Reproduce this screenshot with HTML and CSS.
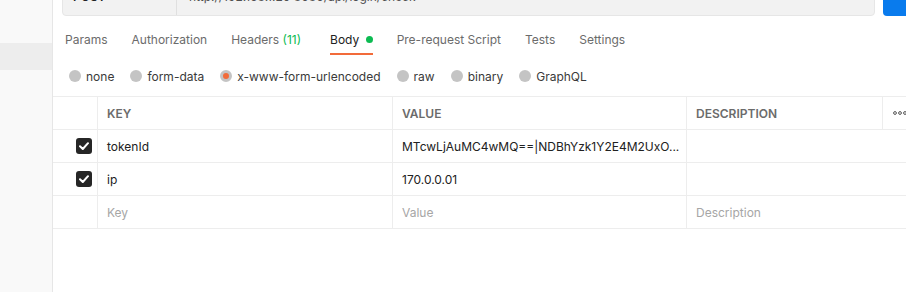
FILE: index.html
```html
<!DOCTYPE html>
<html lang="en">
<head>
    <meta charset="UTF-8">
    <meta name="viewport" content="width=device-width, initial-scale=1.0">
    <title>Request Body</title>
    <link rel="stylesheet" href="styles.css">
</head>
<body>
    <div class="app">
        <aside class="sidebar">
            <div class="side-item active"></div>
        </aside>

        <main class="main">
            <div class="request-bar">
                <div class="url-group">
                    <span class="method">POST</span>
                    <span class="url">http://192.168.1.20:8080/api/login/check</span>
                </div>
                <button class="send">Send</button>
            </div>

            <nav class="tabs">
                <span class="tab">Params</span>
                <span class="tab">Authorization</span>
                <span class="tab headers">Headers <span class="count">(11)</span></span>
                <span class="tab active">Body <span class="live-dot"></span></span>
                <span class="tab">Pre-request Script</span>
                <span class="tab">Tests</span>
                <span class="tab">Settings</span>
            </nav>

            <div class="body-types">
                <label class="radio"><span class="circle"></span>none</label>
                <label class="radio"><span class="circle"></span>form-data</label>
                <label class="radio"><span class="circle checked"></span>x-www-form-urlencoded</label>
                <label class="radio"><span class="circle"></span>raw</label>
                <label class="radio"><span class="circle"></span>binary</label>
                <label class="radio"><span class="circle"></span>GraphQL</label>
            </div>

            <div class="kv-table">
                <div class="row head">
                    <div class="cell check"></div>
                    <div class="cell key">KEY</div>
                    <div class="cell value">VALUE</div>
                    <div class="cell desc">DESCRIPTION</div>
                    <div class="cell more">
                        <svg width="14" height="4" viewBox="0 0 14 4">
                            <circle cx="2" cy="2" r="1.4" fill="none" stroke="#555" stroke-width="1"/>
                            <circle cx="7" cy="2" r="1.4" fill="none" stroke="#555" stroke-width="1"/>
                            <circle cx="12" cy="2" r="1.4" fill="none" stroke="#555" stroke-width="1"/>
                        </svg>
                    </div>
                </div>
                <div class="row">
                    <div class="cell check">
                        <span class="box">
                            <svg width="10" height="8" viewBox="0 0 10 8"><path d="M1 4.2 L3.8 7 L9 1.2" fill="none" stroke="#fff" stroke-width="2" stroke-linecap="round" stroke-linejoin="round"/></svg>
                        </span>
                    </div>
                    <div class="cell key">tokenId</div>
                    <div class="cell value">MTcwLjAuMC4wMQ==|NDBhYzk1Y2E4M2UxO...</div>
                    <div class="cell desc wide"></div>
                </div>
                <div class="row">
                    <div class="cell check">
                        <span class="box">
                            <svg width="10" height="8" viewBox="0 0 10 8"><path d="M1 4.2 L3.8 7 L9 1.2" fill="none" stroke="#fff" stroke-width="2" stroke-linecap="round" stroke-linejoin="round"/></svg>
                        </span>
                    </div>
                    <div class="cell key">ip</div>
                    <div class="cell value">170.0.0.01</div>
                    <div class="cell desc wide"></div>
                </div>
                <div class="row empty">
                    <div class="cell check"></div>
                    <div class="cell key">Key</div>
                    <div class="cell value">Value</div>
                    <div class="cell desc wide">Description</div>
                </div>
            </div>
        </main>
    </div>
</body>
</html>
```

FILE: styles.css
```css
html, body {
    margin: 0;
    height: 100%;
    overflow: hidden;
}

body {
    font-family: Inter, "Noto Sans", sans-serif;
    font-size: 12px;
    color: #212121;
    background: #fff;
}

.app {
    display: flex;
    height: 100%;
}

.sidebar {
    width: 52px;
    flex-shrink: 0;
    background: #f9f9f9;
    border-right: 1px solid #e6e6e6;
    padding-top: 43px;
}

.side-item {
    height: 27px;
}

.side-item.active {
    background: #ededed;
}

.main {
    flex: 1;
    min-width: 0;
}

/* url bar, mostly scrolled out of view */
.request-bar {
    display: flex;
    gap: 8px;
    margin-top: -24px;
    padding: 0 0 0 9px;
    height: 40px;
}

.url-group {
    flex: 1;
    display: flex;
    align-items: center;
    background: #f2f2f2;
    border: 1px solid #e6e6e6;
    border-radius: 4px;
}

.method {
    width: 114px;
    padding-left: 10px;
    box-sizing: border-box;
    font-weight: 600;
    color: #212121;
    border-right: 1px solid #e0e0e0;
    align-self: stretch;
    display: flex;
    align-items: center;
}

.url {
    padding-left: 12px;
    color: #505050;
}

.send {
    width: 100px;
    margin-right: -77px;
    background: #097bed;
    color: #fff;
    border: none;
    border-radius: 4px;
    font: inherit;
    font-weight: 600;
}

.tabs {
    display: flex;
    gap: 24px;
    padding-left: 12px;
}

.tab {
    padding: 16px 0 5px;
    line-height: 16px;
    color: #6b6b6b;
    border-bottom: 2px solid transparent;
    white-space: nowrap;
}

.tab.headers {
    margin-right: 5px;
}

.tab.active {
    color: #212121;
    border-bottom-color: #f26b3a;
}

.count {
    color: #0cbb52;
}

.live-dot {
    display: inline-block;
    width: 7px;
    height: 7px;
    border-radius: 50%;
    background: #0cbb52;
    margin-left: 3px;
    vertical-align: 1px;
}

.body-types {
    display: flex;
    align-items: center;
    gap: 16px;
    height: 41px;
    padding-left: 16px;
    padding-top: 1px;
    box-sizing: border-box;
}

.radio {
    display: flex;
    align-items: center;
    gap: 5px;
    color: #3a3a3a;
    white-space: nowrap;
}

.circle {
    width: 12px;
    height: 12px;
    border-radius: 50%;
    background: #c4c4c4;
    box-sizing: border-box;
}

.circle.checked {
    background: #f26b3a;
    border: 3px solid #c4c4c4;
}

.kv-table {
    border-top: 1px solid #ededed;
    width: 900px;
}

.row {
    display: flex;
    height: 33px;
    border-bottom: 1px solid #ededed;
    box-sizing: border-box;
}

.cell {
    display: flex;
    align-items: center;
    padding-left: 9px;
    box-sizing: border-box;
    border-right: 1px solid #ededed;
    white-space: nowrap;
    overflow: hidden;
}

.cell.check {
    width: 45px;
    padding: 0 0 0 23px;
}

.cell.key {
    width: 295px;
}

.cell.value {
    width: 294px;
}

.cell.desc {
    width: 196px;
}

.cell.desc.wide {
    flex: 1;
    border-right: none;
}

.cell.more {
    flex: 1;
    border-right: none;
    padding-left: 10px;
}

.head .cell {
    font-weight: 600;
    color: #6b6b6b;
}

.empty .cell {
    color: #a6a6a6;
}

.box {
    width: 16px;
    height: 16px;
    border-radius: 3px;
    background: #262626;
    display: flex;
    align-items: center;
    justify-content: center;
}
```
